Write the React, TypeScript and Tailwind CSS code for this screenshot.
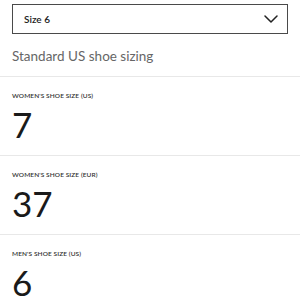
import React from 'react';

const sizes = [
  { label: "Women's shoe size (US)", value: '7' },
  { label: "Women's shoe size (EUR)", value: '37' },
  { label: "Men's shoe size (US)", value: '6' }
];

export default function App() {
  return (
    <div className="w-[300px] h-[300px] overflow-hidden bg-white text-[#1a1a1a]" style={{ fontFamily: 'Lato, "Open Sans", sans-serif' }}>
      {/* Size select */}
      <div className="pt-1 px-3">
        <div className="h-[30px] border border-[#4a4a4a] flex items-center justify-between pl-[11px] pr-[9px]">
          <span className="text-[10px] font-semibold text-[#222]">Size 6</span>
          <svg width="14" height="8" viewBox="0 0 14 8" fill="none">
            <path d="M1 1l6 6 6-6" stroke="#222" strokeWidth="1.5" strokeLinecap="round" strokeLinejoin="round" />
          </svg>
        </div>
      </div>

      <div className="h-[42px] flex items-center px-3 pt-[2px]">
        <span className="text-[13.5px] text-[#666]">Standard US shoe sizing</span>
      </div>

      {sizes.map((s) => (
        <div key={s.label} className="border-t border-[#e8e8e8] px-3 pt-[14px] pb-[13px]">
          <div className="text-[6.5px] leading-[9px] uppercase tracking-[0.1px] text-[#333] font-semibold">{s.label}</div>
          <div className="mt-[6px] text-[35px] leading-[36px] text-[#1a1a1a]">{s.value}</div>
        </div>
      ))}
    </div>
  );
}
